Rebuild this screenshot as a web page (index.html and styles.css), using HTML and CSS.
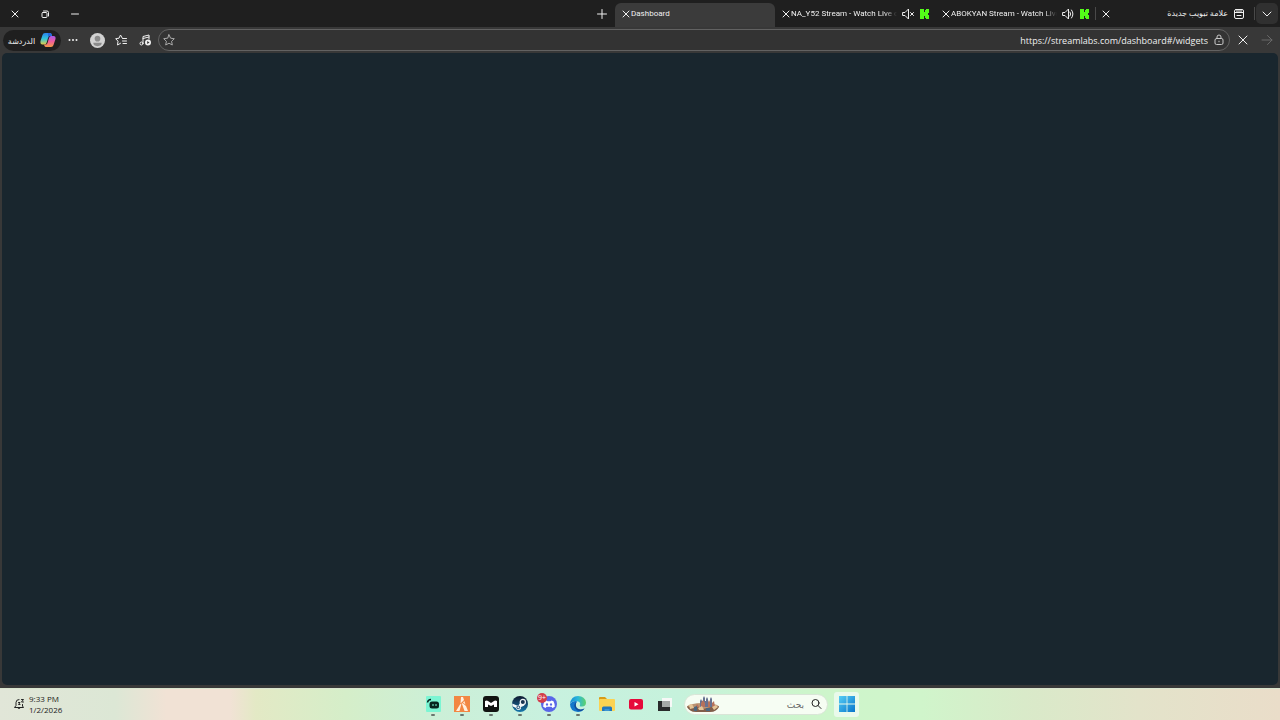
FILE: index.html
```html
<!DOCTYPE html>
<html lang="ar">
<head>
  <meta charset="UTF-8" />
  <title>Dashboard</title>
  <meta name="viewport" content="width=device-width, initial-scale=1" />
  <link rel="stylesheet" href="styles.css">
</head>
<body>
  <svg class="defs" aria-hidden="true">
    <symbol id="close" viewBox="0 0 10 10"><path d="M2 2l6 6M8 2L2 8" /></symbol>
    <symbol id="kick" viewBox="0 0 10 10"><path d="M1 0h4v3h1V1h1V0h3v4H9v2h1v4H7V9H6V7H5v3H1z" /></symbol>
  </svg>

  <header class="tab-strip">
    <div class="window-controls">
      <button aria-label="إغلاق"><svg class="icon" viewBox="0 0 10 10"><path d="M2 2l6 6M8 2L2 8" /></svg></button>
      <button aria-label="استعادة"><svg class="icon" viewBox="0 0 10 10"><rect x="2" y="3.500" width="5" height="5" rx="1" /><path d="M3.500 2h3.500a1.500 1.500 0 0 1 1.500 1.500v3.500" /></svg></button>
      <button aria-label="تصغير"><svg class="icon" viewBox="0 0 10 10"><path d="M1.500 5h7" /></svg></button>
    </div>

    <button class="new-tab" aria-label="علامة تبويب جديدة"><svg class="icon" viewBox="0 0 12 12"><path d="M6 1.500v9M1.500 6h9" /></svg></button>

    <nav class="tabs">
      <div class="tab active">
        <button class="tab-close" aria-label="إغلاق"><svg class="icon"><use href="#close" /></svg></button>
        <a href="#dashboard" class="tab-title">Dashboard</a>
      </div>
      <div class="tab">
        <button class="tab-close" aria-label="إغلاق"><svg class="icon"><use href="#close" /></svg></button>
        <a href="#na" class="tab-title fade">NA_Y52 Stream - Watch Live o</a>
        <button class="tab-sound" aria-label="إلغاء كتم"><svg class="icon sound" viewBox="0 0 12 12"><path d="M1 4.500h2L6.500 1v10L3 7.500H1zM8.500 4.500l3 3M11.500 4.500l-3 3" /></svg></button>
        <svg class="kick"><use href="#kick" /></svg>
      </div>
      <div class="tab">
        <button class="tab-close" aria-label="إغلاق"><svg class="icon"><use href="#close" /></svg></button>
        <a href="#abokyan" class="tab-title fade">ABOKYAN Stream - Watch Live</a>
        <button class="tab-sound" aria-label="كتم"><svg class="icon sound" viewBox="0 0 12 12"><path d="M1 4.500h2L6.500 1v10L3 7.500H1zM8 4q1.500 2 0 4M9.500 2q3 4 0 8" /></svg></button>
        <svg class="kick"><use href="#kick" /></svg>
      </div>
      <div class="tab divided">
        <button class="tab-close" aria-label="إغلاق"><svg class="icon"><use href="#close" /></svg></button>
        <a href="#new" class="tab-title arabic">علامة تبويب جديدة</a>
        <svg class="icon page" viewBox="0 0 12 12"><rect x="1.500" y="1.500" width="9" height="9" rx="1.500" /><path d="M2 4.500h8M4 2v2M6 2v2M8 2v2M4 7.500h4" /></svg>
      </div>
    </nav>

    <button class="tab-menu" aria-label="قائمة علامات التبويب"><svg class="icon" viewBox="0 0 10 10"><path d="M1 3l4 4 4-4" /></svg></button>
  </header>

  <div class="toolbar">
    <button class="copilot">
      <span>الدردشة</span>
      <svg viewBox="0 0 16 16">
        <defs>
          <linearGradient id="cool" x1="0" y1="0" x2="0" y2="1"><stop offset="0" stop-color="#2a83ea" /><stop offset=".5" stop-color="#32c4d8" /><stop offset="1" stop-color="#e4ce45" /></linearGradient>
          <linearGradient id="warm" x1="0" y1="0" x2="0" y2="1"><stop offset="0" stop-color="#a65bea" /><stop offset=".5" stop-color="#ef5c9b" /><stop offset="1" stop-color="#f69a45" /></linearGradient>
        </defs>
        <path fill="url(#cool)" d="M5 1h5q1 0 1.500 1L12 4H9.500Q8.500 4 8 6l-1.500 5q-.5 1.500-2 1.500H2.500Q0 12.500 .5 9l2-6q.5-2 2.500-2z" />
        <path fill="url(#warm)" d="M11 15H6q-1 0-1.500-1L4 12.500h1.500q1.500 0 2-1.500L9 6q.5-2 2-2h2.500Q16 4 15.500 7l-2 6q-.5 2-2.500 2z" />
        <path fill="#2567dc" d="M8 1h2q1 0 1.500 1L12 4H9.500Q8.500 4 8 6z" />
      </svg>
    </button>
    <button aria-label="المزيد"><svg class="icon dots" viewBox="0 0 12 12"><circle cx="2.500" cy="6" r="1" /><circle cx="6" cy="6" r="1" /><circle cx="9.500" cy="6" r="1" /></svg></button>
    <button aria-label="الملف الشخصي"><svg class="avatar" viewBox="0 0 16 16"><circle cx="8" cy="8" r="8" fill="#d2d2d2" /><circle cx="8" cy="6" r="3" fill="#8b8b8b" /><path fill="#8b8b8b" d="M3.500 10.500h9q0 3.500-4.500 3.500t-4.500-3.500z" /></svg></button>
    <button aria-label="المفضلة"><svg class="icon" viewBox="0 0 12 12"><path d="M7.500 4.500L5.500 1 4 4.200.7 4.700 3 7.200 2.500 11l3-1.700M8 4.500h3.500M7.500 7h4M8 9.500h3.500" /></svg></button>
    <button aria-label="الوسائط"><svg class="icon" viewBox="0 0 12 12"><path d="M4 9V2.500L10 1v4M4 4.500L10 3" /><circle cx="2.500" cy="9.500" r="1.500" /><circle cx="9" cy="8.500" r="3" fill="#eee" stroke="none" /><path fill="#333" stroke="none" d="M8.200 7l2.300 1.500L8.200 10z" /></svg></button>

    <form class="address-bar">
      <button type="button" aria-label="إضافة إلى المفضلة"><svg class="icon star" viewBox="0 0 12 12"><path d="M6 .8l1.600 3.400 3.700.5-2.700 2.600.7 3.700L6 9.200 2.700 11l.7-3.700L.7 4.700l3.700-.5z" /></svg></button>
      <input type="text" aria-label="العنوان" value="https://streamlabs.com/dashboard#/widgets" />
      <svg class="icon lock" viewBox="0 0 12 12"><rect x="2" y="4.500" width="8" height="6" rx="1.500" /><path d="M4 4.500V3a2 2 0 0 1 4 0v1.500M6 7.200v.6" /></svg>
    </form>

    <button class="stop" aria-label="إيقاف"><svg class="icon" viewBox="0 0 12 12"><path d="M2 2l8 8M10 2l-8 8" /></svg></button>
    <button class="forward" aria-label="للأمام" disabled><svg class="icon" viewBox="0 0 12 12"><path d="M1 6h10M6.500 1.500L11 6l-4.500 4.500" /></svg></button>
  </div>

  <main class="page-view"></main>

  <footer class="taskbar">
    <button class="clock">
      <svg class="icon bell" viewBox="0 0 12 12"><path d="M6 1.500Q3 1.500 3 4.500v3L1.500 9.500h9L9.500 8V6.500M4.800 10q1.200 1.500 2.400 0M8.500 1.500h2L8.500 4h2M5.500 4.500h1.500L5.500 6.500H7" /></svg>
      <span class="time">9:33 PM<br>1/2/2026</span>
    </button>

    <div class="apps">
      <button class="app running" aria-label="Streamlabs">
        <svg viewBox="0 0 16 16"><rect x="1" width="15" height="16" rx="1" fill="#7cf5d3" /><rect x="4.500" y="5.500" width="9.500" height="7" rx="2.500" fill="#07251f" /><path d="M2.500 6.500q.5-3 3.500-3" fill="none" stroke="#07251f" stroke-width="1.500" /><path d="M8 8v2M11 8v2" stroke="#7cf5d3" /></svg>
      </button>
      <button class="app running" aria-label="FiveM">
        <svg viewBox="0 0 16 16"><rect width="16" height="16" fill="#f28743" /><path fill="#fff0df" d="M7 1h2l1 3-3.500 3.500zM10.300 5l1.200 3.500L9 6.500zM8.500 7l3.500 3 2 5h-3.500L8 8zM6 8.500l1.500-1L5.500 15H2z" /></svg>
      </button>
      <button class="app running" aria-label="Medal">
        <svg viewBox="0 0 16 16"><rect width="16" height="16" rx="3" fill="#111411" /><path fill="#fff" d="M2 5q2-1 3 0l3 2 3-2q1-1 3 0v6h-3V8.500L8 10 5 8.500V11H2z" /></svg>
      </button>
      <button class="app running" aria-label="Steam">
        <svg viewBox="0 0 16 16"><defs><linearGradient id="steam" x1="0" y1="0" x2="0" y2="1"><stop offset="0" stop-color="#10192f" /><stop offset="1" stop-color="#1679ad" /></linearGradient></defs><circle cx="8" cy="8" r="8" fill="url(#steam)" /><path fill="#f2f6f8" d="M.2 7.500l4.800 2 1.500-.3L8.500 6.500l4 3-3.500 1.500a2.500 2.500 0 0 1-5 1L.5 10.300z" /><circle cx="10.800" cy="6" r="2.600" fill="#183450" stroke="#f2f6f8" stroke-width="1.200" /><circle cx="6.300" cy="11.300" r="1.400" fill="none" stroke="#194a70" /></svg>
      </button>
      <button class="app running" aria-label="Discord">
        <svg viewBox="0 0 16 16"><circle cx="8" cy="8" r="8" fill="#5966e8" /><path fill="#fff" d="M5.500 4.500l1 .7h3l1-.7 2 .8q1.500 3 1.300 5.500l-2.300 1.200-1-1.300h-5L4.500 12l-2.300-1.200Q2 8.300 3.500 5.300z" /><ellipse cx="6" cy="8.500" rx="1.100" ry="1.300" fill="#5966e8" /><ellipse cx="10" cy="8.500" rx="1.100" ry="1.300" fill="#5966e8" /></svg>
        <span class="badge">9+</span>
      </button>
      <button class="app running" aria-label="Edge">
        <svg viewBox="0 0 16 16"><defs><linearGradient id="edge" x1="0" y1="0" x2="1" y2="0"><stop offset="0" stop-color="#1789d7" /><stop offset=".5" stop-color="#2bb9d9" /><stop offset="1" stop-color="#60d267" /></linearGradient></defs><path fill="url(#edge)" d="M0 8Q1 0 8 0q7 0 8 6.500 0 4-4 4-3 0-2-1.500Q11 6 7 5 2 4.500 0 8z" /><path fill="#1477ca" d="M0 8q3-4 7.500-2.500Q4 8 6 11.500q3 4 8.500 1Q12 16 8 16 0 15.500 0 8z" /><path fill="#124b99" d="M6.500 6Q3 8.500 5 12q2 3.500 6 3 2-.5 3.500-2.500-5 2-7.500-.5-2-2.500-.5-6z" /></svg>
      </button>
      <button class="app" aria-label="File Explorer">
        <svg viewBox="0 0 16 16"><path fill="#d89b16" d="M0 1.500Q0 1 1 1h5l2 2v3H0z" /><rect y="3" width="16" height="12" rx="1" fill="#fbd352" /><path fill="#2277bd" d="M3 15v-3q0-1.500 1.500-1.500h7q1.500 0 1.500 1.500v3z" /><path fill="#3b94d3" d="M5.500 13h5v2h-5z" /></svg>
      </button>
      <button class="app" aria-label="YouTube">
        <svg viewBox="0 0 16 16"><rect x="1" y="3" width="14" height="10.500" rx="2" fill="#e6093a" /><path fill="#fff" d="M6.500 6v4.500l4-2.250z" /></svg>
      </button>
      <button class="app" aria-label="Task view">
        <svg viewBox="0 0 16 16"><path fill="#292b2b" d="M1 5h4v6h8v4H1z" /><rect x="5" y="2" width="10" height="9" fill="#f7f8f7" /><rect x="5" y="5" width="8" height="6" fill="#a5aaa7" /></svg>
      </button>

      <label class="search">
        <svg class="castle" viewBox="0 0 34 16">
          <ellipse cx="17" cy="11" rx="16" ry="4" fill="#ba9372" />
          <path fill="#677291" d="M14 11V5l1-2 1 2h1V2l1-2 1 2v3h1V3l1-2 1 2v8zM24 11V3l1-2 1 2v8z" />
          <path fill="#b6715b" d="M15 11V7l2-3 2 3v4zM22 11V6l1-2 1 2v5zM26 11V7l2-2 1 6zM9 12l2-4 3 4z" />
          <path fill="#815d4a" d="M1 10l5 2 6-1 5 2 8-2 8-1q-2 6-9 6H10q-7 0-9-6z" />
          <path fill="#e5c497" d="M3 9l3-1 2 4-4 1zM12 12l4-2 2 4h-5zM26 11l4-2 2 2-4 3z" />
          <path fill="#4c667e" d="M8 11l3-1v5H8zM20 12h4v3h-4z" />
        </svg>
        <input type="text" dir="rtl" placeholder="بحث" aria-label="بحث" />
        <svg class="icon magnifier" viewBox="0 0 12 12"><circle cx="5.500" cy="5" r="3.500" /><path d="M8 7.500l3 3" /></svg>
      </label>

      <button class="start" aria-label="Start">
        <svg viewBox="0 0 16 16"><defs><linearGradient id="win" gradientUnits="userSpaceOnUse" x1="0" y1="0" x2="16" y2="16"><stop offset="0" stop-color="#55cdf5" /><stop offset="1" stop-color="#0875cb" /></linearGradient></defs><path fill="url(#win)" d="M0 0h7.600v7.600H0zM8.400 0H16v7.600H8.400zM0 8.400h7.600V16H0zM8.400 8.400H16V16H8.400z" /></svg>
      </button>
    </div>
  </footer>
</body>
</html>
```

FILE: styles.css
```css
:root {
  --strip-color: #1f1f1f;
  --toolbar-color: #383838;
  --view-color: #19262e;
  --text-color: #f0f0f0;
}

* {
  box-sizing: border-box;
  margin: 0;
  padding: 0;
}

body {
  display: flex;
  flex-direction: column;
  height: 100vh;
  overflow: hidden;
  background: var(--toolbar-color);
  color: var(--text-color);
  font-family: 'Open Sans', 'DejaVu Sans', sans-serif;
  font-size: 9px;
}

button,
input {
  border: 0;
  background: none;
  color: inherit;
  font: inherit;
}

button {
  display: flex;
  align-items: center;
  justify-content: center;
  flex-shrink: 0;
}

svg {
  display: block;
  flex-shrink: 0;
}

.defs {
  position: absolute;
  width: 0;
  height: 0;
}

.icon {
  width: 12px;
  height: 12px;
  fill: none;
  stroke: currentColor;
  stroke-linecap: round;
  stroke-linejoin: round;
}

/* Tab strip */
.tab-strip {
  display: flex;
  height: 27px;
  flex-shrink: 0;
  padding-right: 2px;
  background: var(--strip-color);
}

.window-controls {
  display: flex;
}

.window-controls button {
  width: 30px;
}

.window-controls .icon {
  width: 10px;
  height: 10px;
}

.new-tab {
  width: 26px;
  margin-left: auto;
}

.tabs {
  display: flex;
  min-width: 0;
}

.tab {
  display: flex;
  align-items: center;
  width: 160px;
  min-width: 0;
  padding: 0 5px;
}

.tab.active {
  margin-top: 3px;
  padding-bottom: 3px;
  background: #3b3b3b;
  border-radius: 6px 6px 0 0;
}

.tab.divided {
  position: relative;
}

.tab.divided::before,
.tab.divided::after {
  content: '';
  position: absolute;
  top: 7px;
  width: 1px;
  height: 13px;
  background: #494949;
}

.tab.divided::before {
  left: 0;
}

.tab.divided::after {
  right: 0;
}

.tab-close {
  width: 11px;
}

.tab-close .icon {
  width: 10px;
  height: 10px;
}

.tab-title {
  flex: 1;
  min-width: 0;
  overflow: hidden;
  color: inherit;
  font-family: Roboto, 'DejaVu Sans', sans-serif;
  font-size: 8px;
  text-decoration: none;
  white-space: nowrap;
}

.fade {
  -webkit-mask-image: linear-gradient(to right, #000 88%, transparent);
  mask-image: linear-gradient(to right, #000 88%, transparent);
}

.arabic {
  direction: rtl;
  padding-right: 5px;
}

.tab-sound {
  width: 22px;
}

.kick {
  width: 10px;
  height: 10px;
  margin-right: 1px;
  fill: #53fc18;
}

.page {
  margin-right: 5px;
}

.tab-menu {
  width: 22px;
  margin: 3px 0 3px 1px;
  background: #303030;
  border-radius: 5px;
}

.tab-menu .icon {
  width: 10px;
  height: 10px;
}

/* Toolbar */
.toolbar {
  display: flex;
  align-items: center;
  height: 26px;
  flex-shrink: 0;
  padding: 0 1px 0 3px;
}

.toolbar > button {
  width: 24px;
  height: 22px;
}

.toolbar > .copilot {
  gap: 5px;
  width: 58px;
  height: 21px;
  background: var(--strip-color);
  border-radius: 11px;
  font-size: 8px;
}

.copilot svg {
  width: 16px;
  height: 16px;
}

.dots {
  fill: currentColor;
  stroke: none;
}

.avatar {
  width: 15px;
  height: 15px;
}

.address-bar {
  display: flex;
  align-items: center;
  flex: 1;
  height: 22px;
  margin: 0 1px;
  padding: 0 4px;
  border: 1px solid #626262;
  border-radius: 11px;
  background: #333;
}

.star {
  color: #aaa;
}

.address-bar input {
  flex: 1;
  min-width: 0;
  padding: 0 5px;
  font-size: 9px;
  text-align: right;
}

.lock {
  color: #c8c8c8;
}

.forward {
  color: #696969;
}

.page-view {
  flex: 1;
  min-height: 0;
  margin: 0 2px 3px;
  background: var(--view-color);
  border-radius: 5px;
}

/* Taskbar */
.taskbar {
  display: grid;
  grid-template-columns: 1fr auto 1fr;
  align-items: start;
  height: 32px;
  flex-shrink: 0;
  border-top: 1px solid #d9e5cf;
  background: linear-gradient(to right, #e1e6d8 0%, #dce7d5 9%, #f1e2d5 13%, #f1e2d5 18%, #e3e9c5 20%, #d5eec9 27%, #ccefd7 34%, #c8f1df 43%, #c6f2dc 53%, #cdf5cb 63%, #d0f5cb 72%, #d9eac9 80%, #e3e3ca 89%, #eaddc9 100%);
  color: #222;
}

.clock {
  justify-self: start;
  gap: 4px;
  height: 30px;
  padding-left: 13px;
  line-height: 11px;
  text-align: left;
}

.time {
  font-size: 8px;
}

.apps {
  display: flex;
  align-items: center;
  padding-right: 3px;
}

.app {
  position: relative;
  width: 29px;
  height: 30px;
}

.app svg {
  width: 16px;
  height: 16px;
}

.running::after {
  content: '';
  position: absolute;
  bottom: 3px;
  width: 4px;
  height: 2px;
  border-radius: 1px;
  background: #69766f;
}

.badge {
  position: absolute;
  top: 4px;
  left: 3px;
  width: 10px;
  height: 10px;
  border-radius: 5px;
  background: #d33d4b;
  color: #fff;
  font-size: 7px;
  line-height: 10px;
  text-align: center;
}

.search {
  display: flex;
  align-items: center;
  width: 144px;
  height: 21px;
  margin: 0 6px 0 5px;
  padding: 0 5px 0 1px;
  border: 1px solid #d9e5d7;
  border-radius: 11px;
  background: #f6fdf3;
}

.castle {
  width: 34px;
  height: 16px;
}

.search input {
  flex: 1;
  min-width: 0;
  padding: 0 6px;
}

.search input::placeholder {
  color: #666;
  opacity: 1;
}

.start {
  width: 25px;
  height: 25px;
  border-radius: 3px;
  background: #e9faeb;
}

.start svg {
  width: 16px;
  height: 16px;
}
```
